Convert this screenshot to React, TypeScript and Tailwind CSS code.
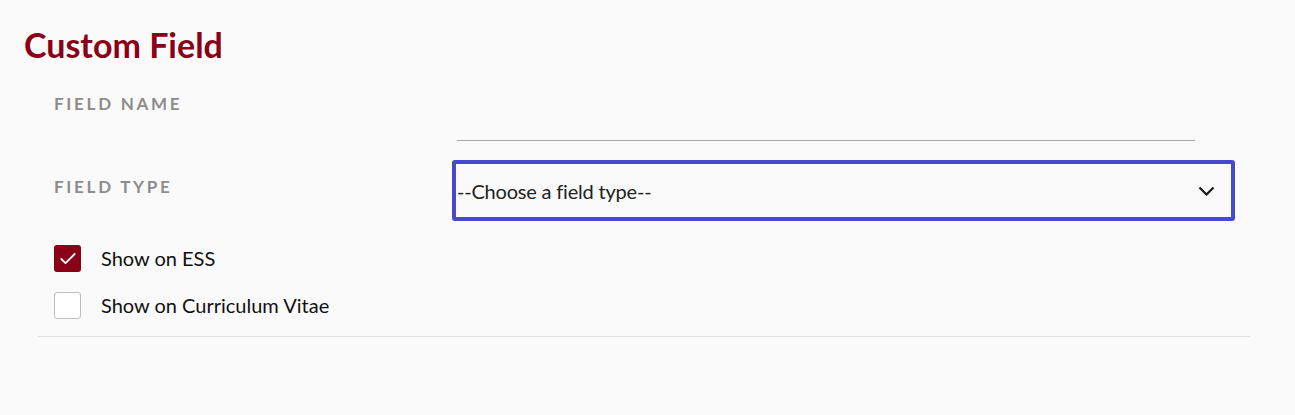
import { Check } from "lucide-react";

export default function App() {
  return (
    <div className="min-h-[415px] w-full bg-[#fafafa] font-['Lato','Noto_Sans',sans-serif] text-[#1a1a1a]">
      <div className="px-6 pt-[25px]">
        <h1 className="text-[34px] font-bold leading-[40px] text-[#8a0016]">Custom Field</h1>
      </div>

      <div className="ml-[38px] mr-[45px] mt-[20px] border-b border-[#e2e2e2] pb-[17px]">
        {/* Field name */}
        <div className="flex">
          <label className="w-[398px] pl-4 pt-[6px] text-[17px] font-bold tracking-[0.16em] text-[#8c8c8c]">
            FIELD NAME
          </label>
          <div className="ml-[21px] h-[56px] w-[738px] border-b border-[#a6a6a6]" />
        </div>

        {/* Field type */}
        <div className="mt-[19px] flex">
          <label className="w-[398px] pl-4 pt-[14px] text-[17px] font-bold tracking-[0.16em] text-[#8c8c8c]">
            FIELD TYPE
          </label>
          <div className="ml-[16px] flex h-[61px] w-[783px] items-center justify-between rounded-[3px] border-4 border-[#4649cf] pl-[1px] pr-[16px]">
            <span className="text-[20px] tracking-[-0.01em] text-[#222]">--Choose a field type--</span>
            <svg width="17" height="10" viewBox="0 0 17 10" fill="none" className="mt-[1px]">
              <path d="M1.5 1.5 L8.5 8.5 L15.5 1.5" stroke="#1a1a1a" strokeWidth="2.2" />
            </svg>
          </div>
        </div>

        {/* Checkboxes */}
        <div className="mt-[24px] flex flex-col gap-5 pl-4">
          <label className="flex items-center gap-5">
            <span className="flex h-[27px] w-[27px] items-center justify-center rounded-[3px] bg-[#8a0016]">
              <Check size={20} strokeWidth={2.2} className="text-white" />
            </span>
            <span className="text-[20px] leading-[27px] text-[#111]">Show on ESS</span>
          </label>
          <label className="flex items-center gap-5">
            <span className="h-[27px] w-[27px] rounded-[3px] border border-[#bdbdbd] bg-white" />
            <span className="text-[20px] leading-[27px] text-[#111]">Show on Curriculum Vitae</span>
          </label>
        </div>
      </div>
    </div>
  );
}
